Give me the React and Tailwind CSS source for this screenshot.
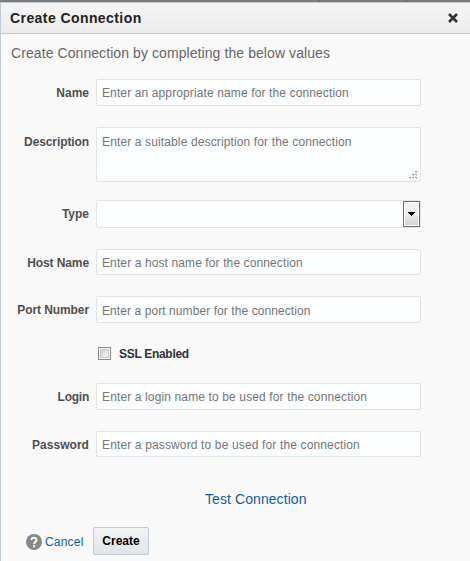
import React from "react";

const fieldBox =
  "block w-[325px] shrink-0 rounded-[2px] border border-[#dfe4e7] bg-[#fcfdff] px-[5px] text-[12px] text-[#333] outline-none placeholder:text-[#757575] placeholder:opacity-100";

function Row({ label, className, labelClass = "", children }) {
  return (
    <div className={`flex items-start ${className}`}>
      <label className={`mr-[7px] flex w-[88px] shrink-0 justify-end text-[12px] leading-[14px] font-bold whitespace-nowrap text-[#4f4f4f] ${labelClass}`}>
        {label}
      </label>
      {children}
    </div>
  );
}

function Grip() {
  return (
    <svg className="pointer-events-none absolute right-[4px] bottom-[3px]" width="8" height="8" viewBox="0 0 8 8" fill="#a3a3a3" shapeRendering="crispEdges">
      <path d="M6 0h2v1H6zM3 3h2v1H3zM6 3h2v1H6zM0 6h2v1H0zM3 6h2v1H3zM6 6h2v1H6z" />
      <path d="M7 1h1v1H7zM4 4h1v1H4zM7 4h1v1H7zM1 7h1v1H1zM4 7h1v1H4zM7 7h1v1H7z" fill="#c4c4c4" />
    </svg>
  );
}

export default function App() {
  return (
    <div className="h-[561px] w-[470px] overflow-hidden bg-[#7e7c79] font-['Liberation_Sans',Arial,sans-serif]">
      <div className="flex h-[2px]">
        <span className="ml-[319px] h-full w-px bg-[#6a6866]" />
        <span className="ml-[86px] h-full w-px bg-[#6a6866]" />
      </div>
      <div className="flex h-[559px] flex-col border-t border-l border-[#c0cad5] bg-[#f9f9f9]">
        <header className="flex h-[31px] shrink-0 items-center justify-between border-b border-[#c0cad5] bg-linear-to-b from-[#f5f5f5] to-[#ececec] pr-[12px] pl-[9px]">
          <h1 className="text-[14px] leading-[16px] font-bold tracking-[0.42px] text-[#222]">Create Connection</h1>
          <button aria-label="Close" className="block">
            <svg width="10" height="10" viewBox="0 0 10 10" stroke="#333" strokeWidth="2.6">
              <path d="M1 1l8 8M9 1l-8 8" />
            </svg>
          </button>
        </header>
        <main className="flex flex-col">
          <p className="mt-[11px] h-[17px] pl-[10px] text-[14px] leading-[17px] tracking-[0.08px] whitespace-nowrap text-[#666]">
            Create Connection by completing the below values
          </p>
          <Row label="Name" className="mt-[17px] h-[27px]" labelClass="pt-[7px]">
            <input className={`${fieldBox} h-[27px] tracking-[0.12px]`} placeholder="Enter an appropriate name for the connection" />
          </Row>
          <Row label="Description" className="mt-[21px] h-[55px]" labelClass="pt-[8px] tracking-[-0.1px]">
            <div className="relative">
              <textarea className={`${fieldBox} h-[55px] resize-none pt-[7px] leading-[14px] tracking-[0.13px]`} placeholder="Enter a suitable description for the connection" />
              <Grip />
            </div>
          </Row>
          <Row label="Type" className="mt-[18px] h-[28px]" labelClass="pt-[7px]">
            <div className={`${fieldBox} flex h-[28px] justify-end pr-0 pl-0`}>
              <button aria-label="Open list" className="flex h-[26px] w-[17px] items-center justify-center border border-[#6c6c6c] bg-white p-px">
                <span className="flex h-full w-full items-center justify-center bg-linear-to-b from-[#f0f0f0] from-50% to-[#d0d0d0] to-100%">
                  <svg width="7" height="4" viewBox="0 0 7 4" shapeRendering="crispEdges">
                    <path d="M0 0h7v1H0zM1 1h5v1H1zM2 2h3v1H2zM3 3h1v1H3z" fill="#000" />
                  </svg>
                </span>
              </button>
            </div>
          </Row>
          <Row label="Host Name" className="mt-[21px] h-[26px]" labelClass="pt-[7px] tracking-[-0.1px]">
            <input className={`${fieldBox} h-[26px] pt-[2px] tracking-[0.11px]`} placeholder="Enter a host name for the connection" />
          </Row>
          <Row label="Port Number" className="mt-[21px] h-[27px]" labelClass="pt-[7px] tracking-[-0.08px]">
            <input className={`${fieldBox} h-[27px] pt-[2px] tracking-[0.08px]`} placeholder="Enter a port number for the connection" />
          </Row>
          <label className="mt-[24px] ml-[97px] flex h-[13px] items-center">
            <span className="block h-[13px] w-[13px] border border-[#8c8c8c] bg-[#f7f7f7] p-px">
              <span className="block h-[9px] w-[9px] border border-[#c3c7cd] bg-linear-to-br from-[#cdd0d5] to-[#f6f6f6]" />
            </span>
            <span className="ml-[8px] text-[12px] leading-[14px] font-bold tracking-[-0.3px] text-[#333]">SSL Enabled</span>
          </label>
          <Row label="Login" className="mt-[23px] h-[27px]" labelClass="pt-[7px] tracking-[-0.25px]">
            <input className={`${fieldBox} h-[27px] tracking-[0.13px]`} placeholder="Enter a login name to be used for the connection" />
          </Row>
          <Row label="Password" className="mt-[21px] h-[26px]" labelClass="pt-[7px] tracking-[0.05px]">
            <input className={`${fieldBox} h-[26px] pt-[2px] tracking-[0.14px]`} placeholder="Enter a password to be used for the connection" />
          </Row>
          <a className="mt-[34px] ml-[204px] block h-[17px] text-[14px] leading-[17px] tracking-[0.08px] whitespace-nowrap text-[#145c9e]">Test Connection</a>
          <footer className="mt-[19px] ml-[25px] flex h-[28px] items-center">
            <svg className="mt-[2px] block" width="16" height="16" viewBox="0 0 16 16">
              <circle cx="8" cy="8" r="8" fill="#868a8c" />
              <path d="M5.500 6.100C5.500 3 10.600 2.900 10.600 6c0 1.900-2.500 2-2.500 4" fill="none" stroke="#fff" strokeWidth="1.900" />
              <path d="M7.100 11.200h2v2h-2z" fill="#fff" />
            </svg>
            <a className="ml-[3px] w-[48px] pt-px text-[12px] leading-[14px] tracking-[0.2px] text-[#145c9e]">Cancel</a>
            <button className="h-[28px] w-[56px] rounded-[2px] border border-[#c0cad5] bg-linear-to-b from-[#f2f3f4] to-[#e2e6e9] text-[12px] leading-[14px] font-bold text-black">Create</button>
          </footer>
        </main>
      </div>
    </div>
  );
}
